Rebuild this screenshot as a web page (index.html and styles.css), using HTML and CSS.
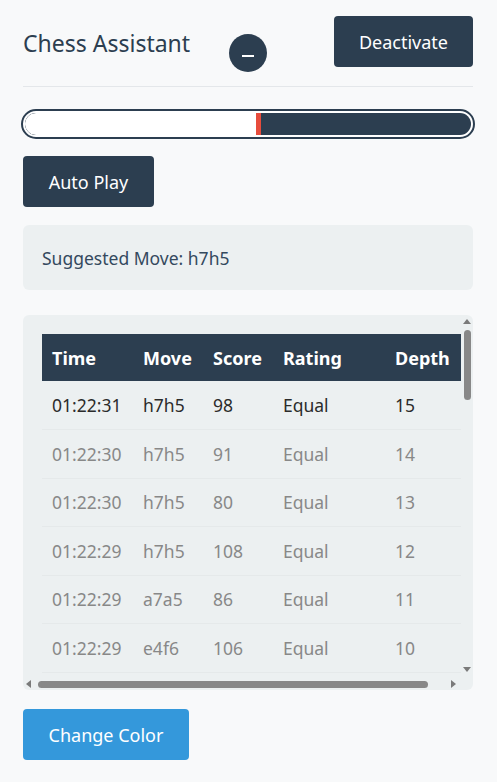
FILE: index.html
```html
<!DOCTYPE html>
<html lang="en">
<head>
<meta charset="utf-8">
<title>Chess Assistant</title>
<link rel="stylesheet" href="styles.css">
</head>
<body>
<div class="panel">
  <div class="header">
    <h2 class="title">Chess Assistant</h2>
    <button class="toggle" aria-label="Minimize"><span class="dash"></span></button>
    <button class="btn btn-dark btn-deactivate">Deactivate</button>
  </div>

  <div class="eval-bar">
    <div class="eval-track">
      <div class="eval-white" style="width: 52.9%"></div>
    </div>
  </div>

  <button class="btn btn-dark btn-auto">Auto Play</button>

  <div class="suggest">Suggested Move: h7h5</div>

  <div class="history">
    <div class="viewport">
      <table class="moves">
        <colgroup>
          <col class="c-time"><col class="c-move"><col class="c-score"><col class="c-rating"><col class="c-depth">
        </colgroup>
        <thead>
          <tr><th>Time</th><th>Move</th><th>Score</th><th>Rating</th><th>Depth</th></tr>
        </thead>
        <tbody>
          <tr class="latest"><td>01:22:31</td><td>h7h5</td><td>98</td><td>Equal</td><td>15</td></tr>
          <tr><td>01:22:30</td><td>h7h5</td><td>91</td><td>Equal</td><td>14</td></tr>
          <tr><td>01:22:30</td><td>h7h5</td><td>80</td><td>Equal</td><td>13</td></tr>
          <tr><td>01:22:29</td><td>h7h5</td><td>108</td><td>Equal</td><td>12</td></tr>
          <tr><td>01:22:29</td><td>a7a5</td><td>86</td><td>Equal</td><td>11</td></tr>
          <tr><td>01:22:29</td><td>e4f6</td><td>106</td><td>Equal</td><td>10</td></tr>
        </tbody>
      </table>
    </div>
    <div class="vbar">
      <span class="arrow arrow-up"></span>
      <div class="vtrack"><div class="vthumb"></div></div>
      <span class="arrow arrow-down"></span>
    </div>
    <div class="hbar">
      <span class="arrow arrow-left"></span>
      <div class="htrack"><div class="hthumb"></div></div>
      <span class="arrow arrow-right"></span>
    </div>
  </div>

  <button class="btn btn-blue btn-color">Change Color</button>
</div>
</body>
</html>
```
FILE: styles.css
```css
* { box-sizing: border-box; }

html, body {
  margin: 0;
  padding: 0;
  background: #f8f9fa;
}

body {
  font-family: "Noto Sans", "Open Sans", "DejaVu Sans", sans-serif;
  color: #2c3e50;
}

.panel {
  padding: 16px 24px 0 23px;
  display: flex;
  flex-direction: column;
  align-items: flex-start;
}

.header {
  width: 100%;
  height: 71px;
  display: flex;
  align-items: flex-start;
  border-bottom: 1px solid #e4e7ea;
}

.title {
  margin: 11px 0 0 0;
  font-size: 23px;
  font-weight: 400;
  line-height: 32px;
  color: #2c3e50;
}

.toggle {
  margin: 18px 0 0 39px;
  width: 38px;
  height: 38px;
  border-radius: 50%;
  border: none;
  background: #2c3e50;
  padding: 0;
  display: flex;
  align-items: center;
  justify-content: center;
  flex-shrink: 0;
}

.dash {
  display: block;
  width: 12px;
  height: 2px;
  background: #fff;
  margin-top: 5px;
}

.btn {
  border: none;
  border-radius: 4px;
  font-family: inherit;
  font-size: 18px;
  color: #fff;
  cursor: pointer;
}

.btn-dark { background: #2c3e50; }
.btn-blue { background: #3498db; }

.btn-deactivate {
  margin-left: auto;
  width: 139px;
  height: 51px;
  flex-shrink: 0;
}

.eval-bar {
  margin-top: 22px;
  margin-left: -2px;
  width: calc(100% + 4px);
  height: 30px;
  border: 2px solid #2c3e50;
  border-radius: 15px;
  padding: 2px;
  background: #fff;
}

.eval-track {
  height: 100%;
  background: #2c3e50;
  border-radius: 11px;
  overflow: hidden;
  display: flex;
}

.eval-white {
  height: 100%;
  background: #fff;
  border-right: 5px solid #e74c3c;
  border-radius: 11px 0 0 11px;
}

.btn-auto {
  margin-top: 17px;
  width: 131px;
  height: 51px;
}

.suggest {
  margin-top: 18px;
  width: 100%;
  height: 65px;
  padding: 0 19px;
  display: flex;
  align-items: center;
  background: #ecf0f1;
  border-radius: 6px;
  font-size: 17.5px;
  color: #34495e;
}

.history {
  position: relative;
  margin-top: 25px;
  width: 100%;
  height: 375px;
  padding: 0 12px 12px 0;
  background: #ecf0f1;
  border-radius: 6px;
}

.viewport {
  width: 100%;
  height: 100%;
  overflow: hidden;
  padding: 19px 0 0 19px;
}

.moves {
  border-collapse: collapse;
  table-layout: fixed;
  width: 439px;
  font-size: 17.5px;
}

.c-time { width: 91px; }
.c-move { width: 70px; }
.c-score { width: 70px; }
.c-rating { width: 112px; }
.c-depth { width: 96px; }

.moves th {
  background: #2c3e50;
  color: #fff;
  font-weight: 700;
  font-size: 18px;
  text-align: left;
  height: 47px;
  padding: 0 10px;
}

.moves td {
  height: 48.5px;
  padding: 0 10px;
  border-bottom: 1px solid #e5e9ea;
  color: #888;
  white-space: nowrap;
}

.moves tr.latest td {
  color: #2b2b2b;
}

/* drawn scrollbars (overlaying the table panel) */
.vbar {
  position: absolute;
  top: 0;
  right: 0;
  bottom: 12px;
  width: 12px;
  display: flex;
  flex-direction: column;
  align-items: center;
}

.vtrack {
  flex: 1;
  width: 100%;
  display: flex;
  justify-content: center;
  padding-top: 3px;
}

.vthumb {
  width: 7px;
  height: 70px;
  background: #888;
  border-radius: 4px;
}

.hbar {
  position: absolute;
  left: 0;
  right: 12px;
  bottom: 0;
  height: 12px;
  display: flex;
  align-items: center;
}

.htrack {
  flex: 1;
  height: 100%;
  display: flex;
  align-items: center;
  padding-left: 3px;
}

.hthumb {
  width: 390px;
  height: 7px;
  background: #888;
  border-radius: 4px;
}

.arrow {
  width: 12px;
  height: 12px;
  flex-shrink: 0;
  position: relative;
}

.arrow::after {
  content: "";
  position: absolute;
  width: 0;
  height: 0;
  border-style: solid;
  border-color: transparent;
}

.arrow-up::after {
  left: 2px;
  top: 4px;
  border-width: 0 4px 5px 4px;
  border-bottom-color: #7a7a7a;
}

.arrow-down::after {
  left: 2px;
  top: 1px;
  border-width: 5px 4px 0 4px;
  border-top-color: #7a7a7a;
}

.arrow-left::after {
  left: 3px;
  top: 2px;
  border-width: 4px 5px 4px 0;
  border-right-color: #7a7a7a;
}

.arrow-right::after {
  left: 2px;
  top: 2px;
  border-width: 4px 0 4px 5px;
  border-left-color: #7a7a7a;
}

.btn-color {
  margin-top: 19px;
  width: 166px;
  height: 51px;
}
```
